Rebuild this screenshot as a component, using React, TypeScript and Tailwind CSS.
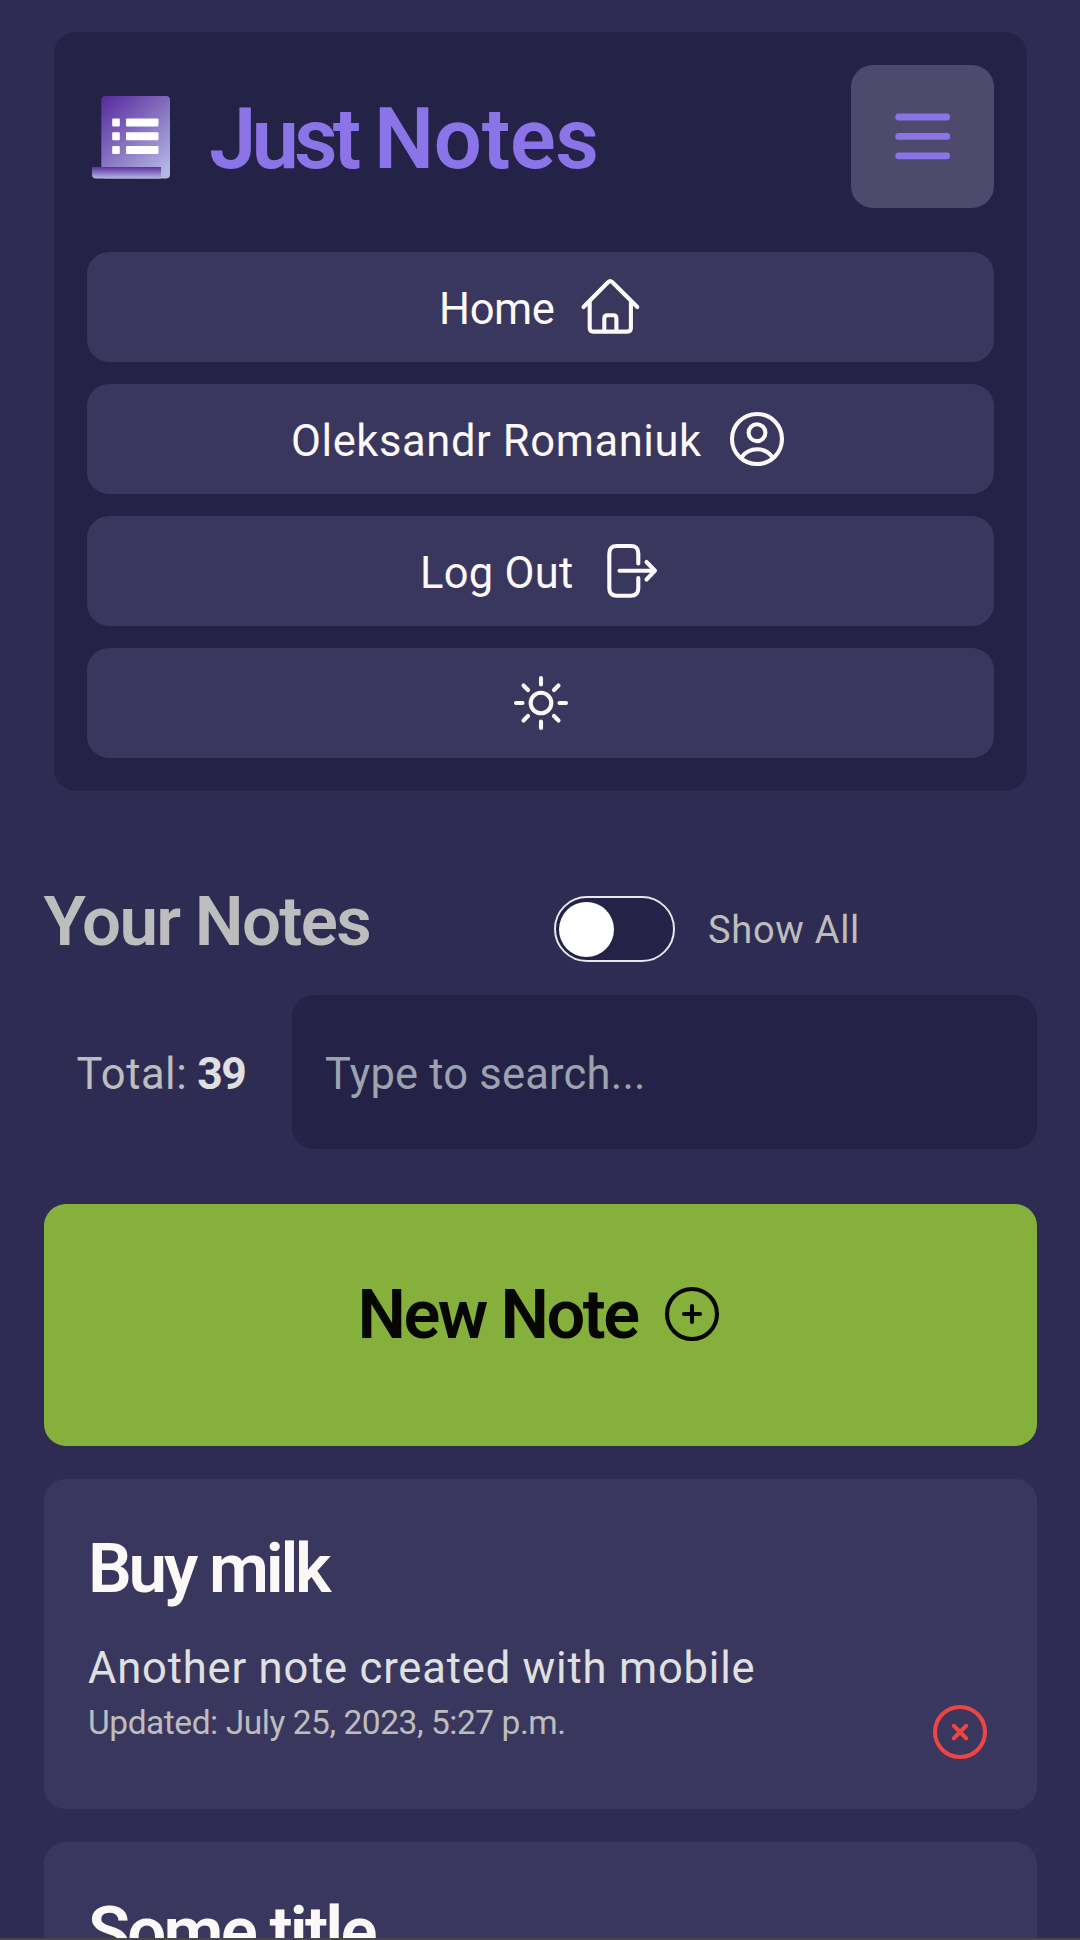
import type { ReactNode } from "react";

function Icon({ children, className = "" }: { children: ReactNode; className?: string }) {
  return (
    <svg
      viewBox="0 0 66 66"
      className={`size-[66px] shrink-0 ${className}`}
      fill="none"
      stroke="currentColor"
      strokeWidth="4.1"
      strokeLinecap="round"
      strokeLinejoin="round"
    >
      {children}
    </svg>
  );
}

function Logo() {
  return (
    <svg viewBox="0 0 78 83" className="mt-[1px] h-[83px] w-[78px] shrink-0">
      <defs>
        <linearGradient id="page" x1="0.1" y1="0" x2="0.85" y2="1">
          <stop offset="0" stopColor="#5b2fa0" />
          <stop offset="1" stopColor="#b4b8e4" />
        </linearGradient>
        <linearGradient id="roll" x1="0" y1="0" x2="0" y2="1">
          <stop offset="0" stopColor="#5b2fa0" />
          <stop offset="1" stopColor="#b4b8e4" />
        </linearGradient>
      </defs>
      <path d="M9.300 80V4a4 4 0 0 1 4-4H74a4 4 0 0 1 4 4v74.500a4 4 0 0 1-4 4H12z" fill="url(#page)" />
      <path d="M0 71h69v11.500H4a4 4 0 0 1-4-4z" fill="url(#roll)" />
      <g fill="#fff">
        <rect x="20.200" y="22.500" width="7.600" height="8" rx="1" />
        <rect x="34" y="22.500" width="32.500" height="8" rx="1" />
        <rect x="20.200" y="36.200" width="7.600" height="8" rx="1" />
        <rect x="34" y="36.200" width="32.500" height="8" rx="1" />
        <rect x="20.200" y="49.900" width="7.600" height="8" rx="1" />
        <rect x="34" y="49.900" width="32.500" height="8" rx="1" />
      </g>
    </svg>
  );
}

function NavRow({ children, className = "" }: { children: ReactNode; className?: string }) {
  return (
    <a
      className={`flex h-[110px] items-center rounded-[22px] bg-[#3a375e] text-[43.5px] leading-[54px] whitespace-nowrap text-[#fcf8f7] ${className}`}
    >
      {children}
    </a>
  );
}

function NoteTitle({ children, className = "" }: { children: ReactNode; className?: string }) {
  return (
    <h2 className={`text-[69px] leading-[80px] font-semibold whitespace-nowrap text-[#fcf8f7] ${className}`}>
      {children}
    </h2>
  );
}

export default function App() {
  return (
    <div className="relative flex h-[1940px] w-[1080px] flex-col overflow-hidden bg-[#2f2c54] px-[43.5px] pt-8 font-['Roboto',sans-serif]">
      <header className="ml-[10.5px] h-[759px] w-[973px] shrink-0 rounded-[22px] bg-[#242246] p-[33px]">
        <div className="flex h-[143px] items-center">
          <div className="ml-[5px]">
            <Logo />
          </div>
          <h1 className="ml-[39px] flex pt-[5px] text-[85px] leading-[100px] font-semibold whitespace-nowrap text-[#8b73e8]">
            <span className="w-[165px] tracking-[-4.9px]">Just </span>
            <span className="tracking-[-0.3px]">Notes</span>
          </h1>
          <button className="ml-auto flex size-[143px] items-center justify-center rounded-[22px] bg-[#4d4a6e] text-[#8b73e8]">
            <svg viewBox="0 0 66 66" className="size-[66px]" stroke="currentColor" strokeWidth="6.8" strokeLinecap="round">
              <path d="M8.700 13H56.700M8.700 32.400H56.700M8.700 51.800H56.700" />
            </svg>
          </button>
        </div>
        <nav className="mt-[44px] flex flex-col gap-[22px]">
          <NavRow className="pl-[352px]">
            <span className="w-[137.500px] pt-1.5 tracking-[-0.4px]">Home</span>
            <Icon>
              <path d="M6.500 33 31 8.200Q33.200 6.200 35.400 8.200L60.300 33" />
              <path d="M12.700 28V54Q12.700 57.600 16.300 57.600H50.300Q53.900 57.600 53.900 54V28" />
              <path d="M27.300 57V44.500Q27.300 41.200 30.500 41.200H36.200Q39.400 41.200 39.400 44.500V57" />
            </Icon>
          </NavRow>
          <NavRow className="pl-[204px]">
            <span className="w-[432.500px] pt-1.5 tracking-[0.6px]">Oleksandr Romaniuk</span>
            <Icon>
              <circle cx="33" cy="33" r="25" />
              <circle cx="33" cy="26.700" r="8.400" />
              <path d="M17.800 51Q23.500 43.300 33 43.300T48.200 51" />
            </Icon>
          </NavRow>
          <NavRow className="pl-[333px]">
            <span className="w-[180px] pt-1.5 tracking-[0.27px]">Log Out</span>
            <Icon>
              <path d="M38.300 25.500V15.500Q38.300 8 30.800 8H16.800Q9.300 8 9.300 15.500V50.200Q9.300 57.700 16.800 57.700H30.800Q38.300 57.700 38.300 50.200V40" />
              <path d="M19.500 32.700H54.500M46.500 24 55 32.700 46.500 41.500" />
            </Icon>
          </NavRow>
          <NavRow className="justify-center">
            <Icon>
              <circle cx="33" cy="33" r="10.300" />
              <path d="M33 8V14.500M33 51.500V58M8 33H14.500M51.500 33H58M15.500 15.500 20 20M46 46 50.500 50.500M50.500 15.500 46 20M20 46 15.500 50.500" />
            </Icon>
          </NavRow>
        </nav>
      </header>

      <section className="mt-[105px] flex h-[66px] shrink-0 items-center whitespace-nowrap">
        <h2 className="w-[510.500px] pb-[15px] text-[69px] leading-[80px] font-semibold tracking-[-1.7px] text-[#bdbdbd]">
          Your Notes
        </h2>
        <span className="flex h-[66px] w-[121px] shrink-0 items-center rounded-full border-[2.5px] border-[#e5e7eb] bg-[#242246] pl-[3px]">
          <span className="size-[55px] rounded-full bg-white" />
        </span>
        <span className="ml-[33px] pt-[2px] text-[38px] leading-[50px] tracking-[0.7px] text-[#bdbdbd]">Show All</span>
      </section>

      <section className="mt-[33px] flex h-[154px] shrink-0 items-center text-[43.5px] leading-[54px] whitespace-nowrap">
        <p className="w-[248.500px] pt-1 pl-[33px] tracking-[0.51px] text-[#bdbdbd]">
          Total:<b className="ml-[10px] text-[44.5px] leading-[54px] font-bold tracking-[-1.53px] text-[#e0e0e0]">39</b>
        </p>
        <div className="flex h-full flex-1 items-center rounded-[22px] bg-[#242246] pt-1.5 pl-[33px] tracking-[0.2px] text-[#9ca3af]">
          Type to search...
        </div>
      </section>

      <button className="mt-[55px] flex h-[242px] shrink-0 items-center rounded-[22px] bg-[#86b03c] pb-[22px] pl-[314px] text-left whitespace-nowrap text-[#080602]">
        <span className="w-[301.500px] pt-px text-[68.5px] leading-[80px] font-semibold tracking-[-2.49px]">New Note</span>
        <Icon>
          <circle cx="33" cy="33" r="25" />
          <path d="M33 25V41M25 33H41" />
        </Icon>
      </button>

      <article className="mt-[33px] flex h-[330px] shrink-0 items-end justify-between rounded-[22px] bg-[#3a375e] pr-[44px] pb-[44px] pl-[44.5px] whitespace-nowrap">
        <div className="h-[236px]">
          <NoteTitle className="tracking-[-3.2px]">Buy milk</NoteTitle>
          <p className="mt-[33px] text-[43.5px] leading-[54px] tracking-[0.82px] text-[#e0e0e0]">
            Another note created with mobile
          </p>
          <p className="text-[33.5px] leading-[54px] tracking-[-0.45px] text-[#bdbdbd]">
            Updated: July 25, 2023, 5:27 p.m.
          </p>
        </div>
        <Icon className="text-[#ef4444]">
          <circle cx="33" cy="33" r="25" />
          <path d="M26.800 26.800 39.200 39.200M39.200 26.800 26.800 39.200" />
        </Icon>
      </article>

      <article className="mt-[33px] h-[330px] shrink-0 rounded-[22px] bg-[#3a375e] pt-[50px] pl-[44.5px]">
        <NoteTitle className="tracking-[-2.8px]">Some title</NoteTitle>
      </article>
      <div className="absolute inset-x-0 bottom-0 h-[2px] bg-[#474747]" />
    </div>
  );
}
